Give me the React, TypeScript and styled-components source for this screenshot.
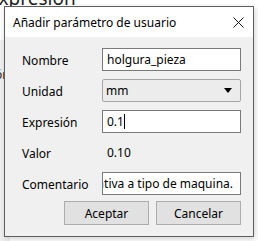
import React from 'react'
import styled, { createGlobalStyle } from 'styled-components'

const GlobalStyle = createGlobalStyle`
  html, body {
    margin: 0;
    padding: 0;
    background: #ffffff;
    overflow: hidden;
  }
  body {
    font-family: 'Noto Sans', 'Open Sans', sans-serif;
    font-size: 12px;
    color: #000;
  }
`

const Screen = styled.div`
  position: relative;
  width: 258px;
  height: 241px;
  overflow: hidden;
  background: #ffffff;
`

// parts of the main window that peek out from behind the dialog
const BackdropTitle = styled.div`
  position: absolute;
  left: -12px;
  top: -15px;
  font-size: 19px;
  color: #222;
`

const BackdropLetter = styled.div`
  position: absolute;
  left: -5px;
  top: 66px;
  font-size: 12px;
  color: #222;
`

const BackdropPanel = styled.div`
  position: absolute;
  left: 0;
  top: 40px;
  width: 10px;
  height: 201px;
  background: #f0f0f0;
`

const Dialog = styled.div`
  position: absolute;
  left: 4px;
  top: 6px;
  width: 248px;
  height: 229px;
  border: 1px solid #5e5e5e;
  background: #f0f0f0;
  box-shadow: 1px 2px 6px rgba(0, 0, 0, 0.18);
  display: flex;
  flex-direction: column;
`

const TitleBar = styled.div`
  height: 30px;
  background: #ffffff;
  display: flex;
  align-items: center;
  justify-content: space-between;
  padding: 0 9px 0 8px;
`

const Title = styled.span`
  font-size: 12px;
  padding-top: 1px;
`

const CloseIcon = () => (
  <svg width="11" height="11" viewBox="0 0 11 11">
    <path d="M0.5 0.5 L10.5 10.5 M10.5 0.5 L0.5 10.5" stroke="#111" strokeWidth="1" />
  </svg>
)

const Body = styled.div`
  flex: 1;
  padding: 11px 11px 0 17px;
  display: flex;
  flex-direction: column;
`

const Form = styled.div`
  display: grid;
  grid-template-columns: 80px 139px;
  grid-auto-rows: 23px;
  row-gap: 8px;
  align-items: center;
`

const Label = styled.span`
  padding-top: 1px;
`

const Field = styled.div`
  height: 23px;
  box-sizing: border-box;
  border: 1px solid #7a7a7a;
  background: #ffffff;
  display: flex;
  align-items: center;
  padding: 0 0 0 4px;
  white-space: nowrap;
  overflow: hidden;
`

// long text scrolled to its end, as a line edit shows it after typing
const ScrolledField = styled(Field)`
  justify-content: flex-end;
  padding: 0 7px 0 0;
`

const Caret = styled.span`
  display: inline-block;
  width: 1px;
  height: 15px;
  background: #000;
`

const Combo = styled.div`
  height: 23px;
  box-sizing: border-box;
  border: 1px solid #a5a5a5;
  border-radius: 2px;
  background: #ececec;
  display: flex;
  align-items: center;
  justify-content: space-between;
  padding: 0 8px 0 3px;
`

const Arrow = styled.span`
  width: 0;
  height: 0;
  border-left: 4px solid transparent;
  border-right: 4px solid transparent;
  border-top: 5px solid #000;
`

const Value = styled.span`
  padding-left: 5px;
`

const Buttons = styled.div`
  display: flex;
  justify-content: flex-end;
  gap: 7px;
  margin-top: 6px;
  padding-right: 1px;
`

const Button = styled.button`
  width: 85px;
  height: 24px;
  border: 1px solid #adadad;
  background: #e1e1e1;
  font-family: inherit;
  font-size: 12px;
  color: #000;
  padding: 0;
`

export default function App() {
  return (
    <Screen>
      <GlobalStyle />
      <BackdropPanel />
      <BackdropTitle>Expresión</BackdropTitle>
      <BackdropLetter>ón</BackdropLetter>
      <Dialog>
        <TitleBar>
          <Title>Añadir parámetro de usuario</Title>
          <CloseIcon />
        </TitleBar>
        <Body>
          <Form>
            <Label>Nombre</Label>
            <Field>holgura_pieza</Field>
            <Label>Unidad</Label>
            <Combo>
              <span>mm</span>
              <Arrow />
            </Combo>
            <Label>Expresión</Label>
            <Field>
              0.1
              <Caret />
            </Field>
            <Label>Valor</Label>
            <Value>0.10</Value>
            <Label>Comentario</Label>
            <ScrolledField>Holgura relativa a tipo de maquina.</ScrolledField>
          </Form>
          <Buttons>
            <Button>Aceptar</Button>
            <Button>Cancelar</Button>
          </Buttons>
        </Body>
      </Dialog>
    </Screen>
  )
}
